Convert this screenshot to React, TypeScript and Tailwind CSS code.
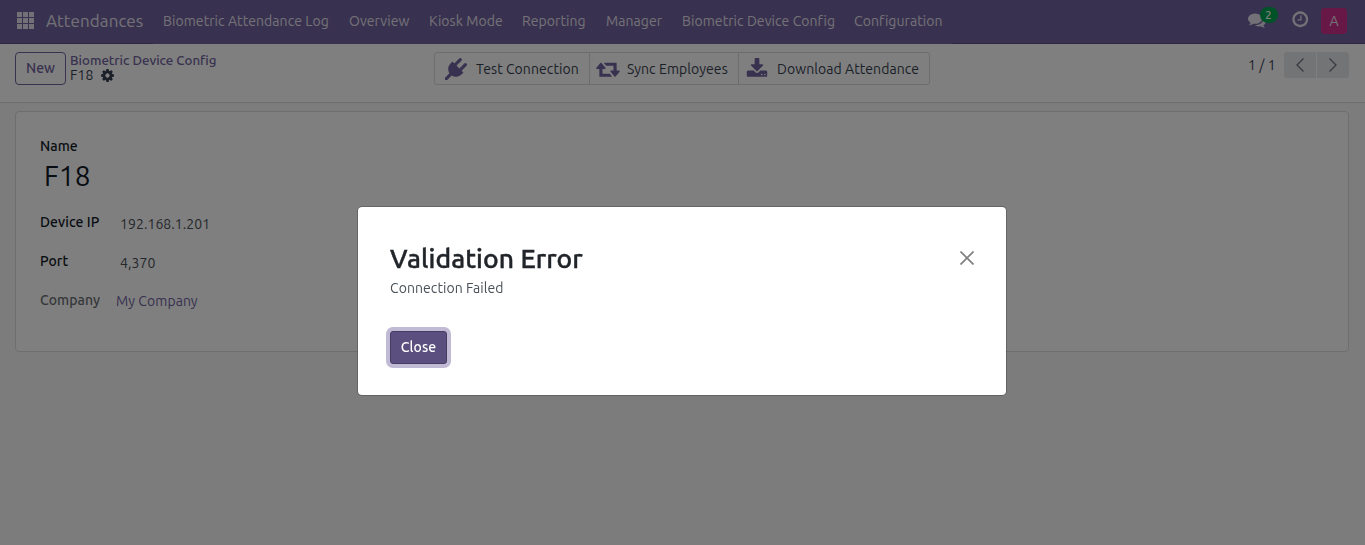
import React from "react";

type IconProps = { d: string; className: string; viewBox?: string };

const Icon = ({ d, className, viewBox = "0 0 1792 1792" }: IconProps) => (
  <svg viewBox={viewBox} className={`block shrink-0 ${className}`} fill="currentColor" aria-hidden="true">
    <path d={d} />
  </svg>
);

const PLUG =
  "M1755 453q37 38 37 90.5t-37 90.5l-401 400 150 150-160 160q-163 163-389.5 186.5t-411.5-100.5l-362 362h-181v-181l362-362q-124-185-100.5-411.5t186.5-389.5l160-160 150 150 400-401q38-37 91-37t90 37 37 90.5-37 90.5l-400 401 234 234 401-400q38-37 91-37t90 37z";
const COG =
  "M1152 896q0-106-75-181t-181-75-181 75-75 181 75 181 181 75 181-75 75-181zm512-109v222q0 12-8 23t-20 13l-185 28q-19 54-39 91 35 50 107 138 10 12 10 25t-9 23q-27 37-99 108t-94 71q-12 0-26-9l-138-108q-44 23-91 38-16 136-29 186-7 28-36 28h-222q-14 0-24.5-8.5t-11.5-21.5l-28-184q-49-16-90-37l-141 107q-10 9-25 9-14 0-25-11-126-114-165-168-7-10-7-23 0-12 8-23 15-21 51-66.5t54-70.5q-27-50-41-99l-183-27q-13-2-21-12.5t-8-23.5v-222q0-12 8-23t19-13l186-28q14-46 39-92-40-57-107-138-10-12-10-24 0-10 9-23 26-36 98.5-107.5t94.5-71.5q13 0 26 10l138 107q44-23 91-38 16-136 29-186 7-28 36-28h222q14 0 24.5 8.5t11.5 21.5l28 184q49 16 90 37l142-107q9-9 24-9 13 0 25 10 129 119 165 170 7 8 7 22 0 12-8 23-15 21-51 66.5t-54 70.5q26 50 41 98l183 28q13 2 21 12.5t8 23.5z";
const COMMENTS =
  "M1408 768q0 139-94 257t-256.5 186.5-353.5 68.5q-86 0-176-16-124 88-278 128-36 9-86 16h-3q-11 0-20.5-8t-11.5-21q-1-3-1-6.5t.5-6.5 2-6l2.5-5 3.5-5.5 4-5 4.5-5 4-4.5q5-6 23-25t26-29.5 22.5-29 25-38.5 20.5-44q-124-72-195-177t-71-224q0-139 94-257t256.5-186.5 353.5-68.5 353.5 68.5 256.5 186.5 94 257zm384 256q0 120-71 224.5t-195 176.5q10 24 20.5 44t25 38.5 22.5 29 26 29.5 23 25q1 1 4 4.5t4.5 5 4 5 3.500 5.500l2.500 5 2 6 .5 6.500-1 6.500q-3 14-13 22t-22 7q-50-7-86-16-154-40-278-128-90 16-176 16-271 0-472-132 58 4 88 4 161 0 309-45t264-129q125-92 192-212t67-254q0-77-23-152 129 71 204 178t75 230z";
const CLOCK =
  "M1024 544v448q0 14-9 23t-23 9h-320q-14 0-23-9t-9-23v-64q0-14 9-23t23-9h224v-352q0-14 9-23t23-9h64q14 0 23 9t9 23zm416 352q0-148-73-273t-198-198-273-73-273 73-198 198-73 273 73 273 198 198 273 73 273-73 198-198 73-273zm224 0q0 209-103 385.5t-279.5 279.5-385.5 103-385.5-103-279.5-279.5-103-385.5 103-385.5 279.5-279.5 385.5-103 385.5 103 279.5 279.5 103 385.5z";
const DOWNLOAD =
  "M1344 1344q0-26-19-45t-45-19-45 19-19 45 19 45 45 19 45-19 19-45zm256 0q0-26-19-45t-45-19-45 19-19 45 19 45 45 19 45-19 19-45zm128-224v320q0 40-28 68t-68 28h-1472q-40 0-68-28t-28-68v-320q0-40 28-68t68-28h465l135 136q58 56 136 56t136-56l136-136h464q40 0 68 28t28 68zm-325-569q17 41-14 70l-448 448q-18 19-45 19t-45-19l-448-448q-31-29-14-70 17-39 59-39h256v-448q0-26 19-45t45-19h256q26 0 45 19t19 45v448h256q42 0 59 39z";
const RETWEET =
  "M1280 1504q0 13-9.5 22.5t-22.5 9.5h-960q-8 0-13.5-2t-9-7-5.5-8-3-11.5-1-11.5v-600h-192q-26 0-45-19t-19-45q0-24 15-41l320-384q19-22 49-22t49 22l320 384q15 17 15 41 0 26-19 45t-45 19h-192v384h576q16 0 25 11l160 192q7 10 7 21zm640-416q0 24-15 41l-320 384q-20 23-49 23t-49-23l-320-384q-15-17-15-41 0-26 19-45t45-19h192v-384h-576q-16 0-25-12l-160-192q-7-9-7-20 0-13 9.5-22.5t22.5-9.5h960q8 0 13.5 2t9 7 5.5 8 3 11.5 1 11.5v600h192q26 0 45 19t19 45z";

const MENU = [
  { label: "Biometric Attendance Log", cls: "w-[166px]" },
  { label: "Overview", cls: "w-[60px]" },
  { label: "Kiosk Mode", cls: "w-[73px]" },
  { label: "Reporting", cls: "w-[64px]" },
  { label: "Manager", cls: "w-[56px]" },
  { label: "Biometric Device Config", cls: "w-[152px]" },
  { label: "Configuration", cls: "w-[88px]" },
];

function Navbar() {
  return (
    <header className="flex h-11 bg-[#71639e] text-[#e6e3ee]">
      <div className="flex w-[153px] items-center border-b border-[#5a4f7f] pl-[17px]">
        <svg viewBox="0 0 17 17" className="-mt-[3px] block size-[17px] shrink-0" fill="currentColor">
          {[0, 6, 12].map((y) => [0, 6, 12].map((x) => <rect key={`${x}-${y}`} x={x} y={y} width="5" height="5" />))}
        </svg>
        <span className="-mt-[2px] ml-3 text-[17px] whitespace-nowrap">Attendances</span>
      </div>
      <nav className="flex items-center gap-5 pb-[2px] pl-[10px]">
        {MENU.map((m) => (
          <a key={m.label} className={`block whitespace-nowrap ${m.cls}`}>
            {m.label}
          </a>
        ))}
      </nav>
      <div className="ml-[10px] flex flex-1 items-center justify-end border-b border-[#5a4f7f] pr-[18px]">
        <span className="relative mr-[25px] -mt-[3px] block">
          <Icon d={COMMENTS} className="size-[18px]" />
          <span className="absolute -top-[4px] left-[12px] flex h-4 w-[18px] items-center justify-center rounded-full bg-[#00a651] text-[11px] font-medium text-white">
            2
          </span>
        </span>
        <Icon d={CLOCK} className="mr-[12px] -mt-[4px] size-[18.5px]" />
        <span className="-mt-[2px] flex size-[26px] items-center justify-center rounded bg-[#d1308f] pt-px text-[14px]">
          A
        </span>
      </div>
    </header>
  );
}

function ControlPanel() {
  return (
    <div className="flex h-[59px] items-start border-b border-[#dcdde0] bg-white pt-2 pl-[15px] text-[#374151]">
      <button className="flex h-[33px] w-[51px] items-center justify-center rounded border border-[#71639e] pb-px font-medium text-[#71639e]">
        New
      </button>
      <div className="ml-1 flex w-[364px] flex-col pt-px leading-[15px]">
        <span className="text-[13.3px] font-medium tracking-normal whitespace-nowrap text-[#71639e]">
          Biometric Device Config
        </span>
        <span className="flex items-center text-[14px]">
          <span className="w-[30px]">F18</span>
          <Icon d={COG} className="size-[15px]" />
        </span>
      </div>
      <div className="flex h-[33px] w-[496px] rounded-[3px] border border-[#d8dadd]">
        <button className="flex w-[155px] items-center border-r border-[#d8dadd] pl-[10px]">
          <Icon d={PLUG} className="size-[22px] text-[#71639e]" />
          <span className="ml-[9px] pt-[2px] whitespace-nowrap">Test Connection</span>
        </button>
        <button className="flex w-[149px] items-center border-r border-[#d8dadd] pl-[6px]">
          <Icon d={RETWEET} viewBox="0 0 1920 1792" className="h-[22px] w-[24px] text-[#71639e]" />
          <span className="ml-[7px] pt-[2px] whitespace-nowrap">Sync Employees</span>
        </button>
        <button className="flex items-center pl-[7px]">
          <Icon d={DOWNLOAD} className="size-[22px] text-[#71639e]" />
          <span className="ml-[9px] pt-[2px] whitespace-nowrap">Download Attendance</span>
        </button>
      </div>
      <div className="ml-auto flex h-[26px] items-center pr-4">
        <span className="w-[36px] whitespace-nowrap">1 / 1</span>
        <button className="flex h-[26px] w-8 items-center justify-center rounded-l-[3px] bg-[#e7e9ed]">
          <svg viewBox="0 0 10 16" className="block h-4 w-[10px]" fill="none" stroke="#6b7280" strokeWidth="1.3">
            <path d="M8.500 1.500 2 8l6.500 6.500" />
          </svg>
        </button>
        <button className="ml-px flex h-[26px] w-8 items-center justify-center rounded-r-[3px] bg-[#e7e9ed]">
          <svg viewBox="0 0 10 16" className="block h-4 w-[10px]" fill="none" stroke="#6b7280" strokeWidth="1.3">
            <path d="M1.500 1.500 8 8l-6.500 6.500" />
          </svg>
        </button>
      </div>
    </div>
  );
}

function FormSheet() {
  return (
    <main className="flex-1 bg-[#f9f9f9] px-4 pt-2 pl-[15px]">
      <section className="h-[241px] rounded border border-[#dcdde0] bg-white pt-[24px] pl-6 leading-5 text-[#495057]">
        <div className="font-medium text-[#111827]">Name</div>
        <div className="mt-[2px] pl-1 text-[28px] leading-9 text-[#111827]">F18</div>
        <div className="mt-[18px] flex h-[39px]">
          <span className="w-20 font-medium text-[#111827]">Device IP</span>
          <span className="pt-[2px]">192.168.1.201</span>
        </div>
        <div className="flex h-[39px]">
          <span className="w-20 font-medium text-[#111827]">Port</span>
          <span className="pt-[2px]">4,370</span>
        </div>
        <div className="flex">
          <span className="w-[76px] font-medium text-[#6b7075]">Company</span>
          <span className="pt-px text-[#71639e]">My Company</span>
        </div>
      </section>
    </main>
  );
}

function ErrorDialog() {
  return (
    <div className="fixed inset-0 flex items-start justify-center bg-black/50 pt-[206px] pr-[1px]">
      <div
        role="alertdialog"
        className="h-[190px] w-[650px] rounded-[5px] border border-black/20 bg-white bg-clip-padding px-8 pt-[35px]"
      >
        <div className="flex items-start justify-between">
          <h1 className="text-[26.5px] leading-8 font-medium whitespace-nowrap text-[#212529] [-webkit-text-stroke:0.4px_#212529]">
            Validation Error
          </h1>
          <svg viewBox="0 0 14 14" className="mt-[9px] block size-[14px]" fill="none" stroke="#7f7f7f" strokeWidth="1.7">
            <path d="M.5.5l13 13M13.500.5l-13 13" />
          </svg>
        </div>
        <p className="mt-[4px] leading-5 text-[#495057]">Connection Failed</p>
        <button className="mt-[33px] flex h-[33px] w-[57px] items-center justify-center rounded-[3px] border border-[#453c61] bg-[#5a4f7f] pb-px font-medium text-white ring-4 ring-[#c0bad4]">
          Close
        </button>
      </div>
    </div>
  );
}

export default function App() {
  return (
    <div className="flex h-screen flex-col overflow-hidden font-['Ubuntu','Noto_Sans',sans-serif] text-[14px] tracking-[0.07px]">
      <Navbar />
      <ControlPanel />
      <FormSheet />
      <ErrorDialog />
    </div>
  );
}
